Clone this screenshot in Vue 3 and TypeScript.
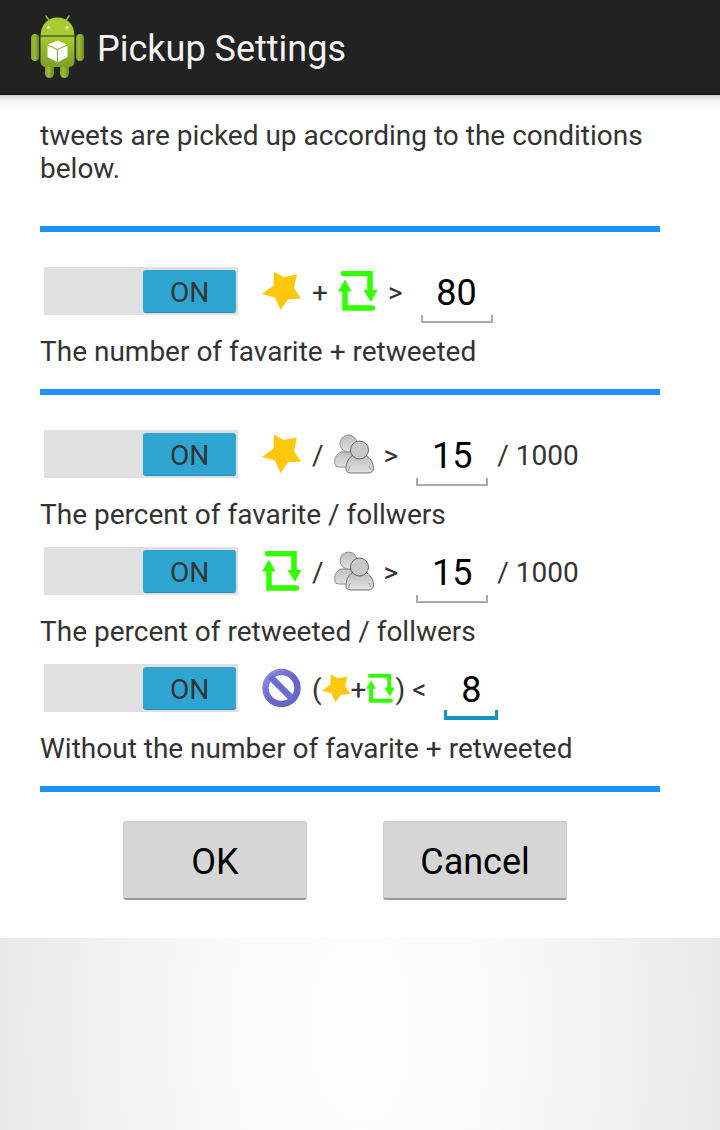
<script setup lang="ts">
import { reactive } from 'vue'

type IconName = 'star' | 'retweet' | 'people' | 'ban'
interface Part { icon?: IconName; text?: string }
interface Condition {
  id: string
  enabled: boolean
  parts: Part[]
  compact?: boolean
  operator: string
  value: string
  suffix?: string
  caption: string
  endsGroup: boolean
}

const conditions = reactive<Condition[]>([
  { id: 'total', enabled: true, parts: [{ icon: 'star' }, { text: '+' }, { icon: 'retweet' }], operator: '>', value: '80', caption: 'The number of favarite + retweeted', endsGroup: true },
  { id: 'favorite', enabled: true, parts: [{ icon: 'star' }, { text: '/' }, { icon: 'people' }], operator: '>', value: '15', suffix: '/ 1000', caption: 'The percent of favarite / follwers', endsGroup: false },
  { id: 'retweet', enabled: true, parts: [{ icon: 'retweet' }, { text: '/' }, { icon: 'people' }], operator: '>', value: '15', suffix: '/ 1000', caption: 'The percent of retweeted / follwers', endsGroup: false },
  { id: 'without', enabled: true, compact: true, parts: [{ icon: 'ban' }, { text: '(' }, { icon: 'star' }, { text: '+' }, { icon: 'retweet' }, { text: ')' }], operator: '<', value: '8', caption: 'Without the number of favarite + retweeted', endsGroup: true },
])
</script>

<template>
  <div class="screen">
    <svg class="defs" aria-hidden="true">
      <defs>
        <linearGradient id="droid" x1="0" y1="0" x2="0" y2="1">
          <stop offset="0" stop-color="#a6c82f" /><stop offset="1" stop-color="#7ba024" />
        </linearGradient>
        <linearGradient id="limb" x1="0" y1="0" x2="1" y2="0">
          <stop offset="0" stop-color="#7c9f28" /><stop offset=".4" stop-color="#9abd32" /><stop offset="1" stop-color="#66881c" />
        </linearGradient>
        <linearGradient id="person" x1="0" y1="0" x2="0" y2="1">
          <stop offset="0" stop-color="#bdbdbd" /><stop offset="1" stop-color="#e2e2e2" />
        </linearGradient>
        <linearGradient id="forbid" x1="0" y1="0" x2="1" y2="1">
          <stop offset="0" stop-color="#8f8fdf" /><stop offset=".5" stop-color="#6868cc" /><stop offset="1" stop-color="#6464c8" />
        </linearGradient>
        <symbol id="icon-star" viewBox="0 0 40 40">
          <path fill="#ffc80a" d="M12 .5 21.500 6 35 3.500 32 17 39 27.500 26 28.500 18.500 39 13 26.500 0 23 11.500 14.500Z" />
        </symbol>
        <symbol id="icon-retweet" viewBox="0 0 40 40">
          <path fill="none" stroke="#32ff00" stroke-width="5.500" stroke-linecap="round" stroke-linejoin="miter" d="M5.500 2.500H32V21M34.500 37H7V19" />
          <path fill="#32ff00" d="M0 20.500 7 8.500 13.500 20.500ZM25.500 19H39.500L33 31Z" />
        </symbol>
        <symbol id="icon-people" viewBox="0 0 40 40">
          <g fill="url(#person)" stroke="#8e8e8e" stroke-width="1">
            <path d="M1 30C0 25 2 20 7 18H18V33H5Q1 33 1 30Z" />
            <circle cx="14.500" cy="9.500" r="8.500" />
            <path stroke="#707070" d="M12 35C12 28 15 23 20 21H31C36 23 39 28 39.500 34Q39.500 39 34 39H17Q12 39 12 35Z" />
            <circle cx="25.500" cy="16" r="9" fill="#c9c9c9" stroke="#656565" />
          </g>
          <path fill="none" stroke="#999" d="M16 32 14.500 37M35 32 37 36" />
        </symbol>
        <symbol id="icon-ban" viewBox="0 0 40 40">
          <circle cx="19.500" cy="20" r="16" fill="none" stroke="url(#forbid)" stroke-width="6.500" />
          <path stroke="#6b6bd0" stroke-width="6.500" d="M8.500 9 30.500 31" />
        </symbol>
      </defs>
    </svg>

    <header class="bar">
      <svg class="droid" viewBox="0 0 54 64" aria-hidden="true">
        <path stroke="#9dbb3a" stroke-width="1.500" stroke-linecap="round" d="M16 1 20 7M39 1 35 7" />
        <rect x="15" y="46" width="9" height="17" rx="4.500" fill="url(#limb)" />
        <rect x="30" y="46" width="9" height="17" rx="4.500" fill="url(#limb)" />
        <rect x="1" y="19" width="8" height="27" rx="4" fill="url(#limb)" />
        <rect x="46" y="19" width="8" height="27" rx="4" fill="url(#limb)" />
        <path fill="#a9cb32" d="M10.500 20.500C11 9 18 2.500 27.500 2.500S44 9 44.500 20.500Z" />
        <path fill="url(#droid)" d="M10.500 21.500H44.500V46Q44.500 52 38.500 52H16.500Q10.500 52 10.500 46Z" />
        <circle cx="18.500" cy="12.500" r="1.500" fill="#f2f8df" /><circle cx="37" cy="12.500" r="1.500" fill="#f2f8df" />
        <path fill="#fff" d="M27.500 25.500 37 29.500 27.500 34 18 29.500ZM17.500 30.500 27 35V47L17.500 42ZM37.500 30.500 28 35V47L37.500 42Z" />
      </svg>
      <h1>Pickup Settings</h1>
    </header>

    <form class="panel" @submit.prevent>
      <p class="intro">tweets are picked up according to the conditions below.</p>
      <hr />
      <template v-for="c in conditions" :key="c.id">
        <section class="condition" :class="{ first: c.id === 'total' || c.id === 'favorite' }">
          <div class="row">
            <label class="switch">
              <input v-model="c.enabled" type="checkbox" role="switch" :aria-label="c.caption" />
              <span class="thumb">{{ c.enabled ? 'ON' : 'OFF' }}</span>
            </label>
            <div class="formula" :class="{ compact: c.compact }">
              <template v-for="(p, i) in c.parts" :key="i">
                <svg v-if="p.icon" class="icon" :class="p.icon" aria-hidden="true"><use :href="`#icon-${p.icon}`" /></svg>
                <span v-else class="sign">{{ p.text }}</span>
              </template>
              <span class="sign operator">{{ c.operator }}</span>
            </div>
            <label class="field" :class="{ active: c.compact }" :for="`value-${c.id}`">
              <input :id="`value-${c.id}`" v-model="c.value" type="text" inputmode="numeric" :aria-label="c.caption" />
            </label>
            <span v-if="c.suffix" class="sign suffix">{{ c.suffix }}</span>
          </div>
          <p class="caption">{{ c.caption }}</p>
        </section>
        <hr v-if="c.endsGroup" />
      </template>
      <div class="actions">
        <button type="submit">OK</button>
        <button type="button">Cancel</button>
      </div>
    </form>
  </div>
</template>

<style>
body {
  margin: 0;
}
</style>

<style scoped>
.screen {
  min-height: 100vh;
  background: radial-gradient(ellipse 52% 60% at 50% 91%, #fdfdfd 0%, #fafafa 35%, #f2f2f2 65%, #e8e8e8 100%);
  font-family: Roboto, "Liberation Sans", sans-serif;
  font-size: 28px;
  line-height: 33px;
  color: #333;
}
.defs {
  position: absolute;
  width: 0;
  height: 0;
}
.bar {
  display: flex;
  align-items: center;
  gap: 13px;
  box-sizing: border-box;
  height: 95px;
  padding: 0 30px;
  background: #222;
  border-bottom: 2px solid #151515;
}
.droid {
  width: 54px;
  height: 64px;
}
h1 {
  margin: 0;
  padding-top: 4px;
  font-size: 36px;
  line-height: 44px;
  font-weight: 400;
  color: #f3f3f3;
}
.panel {
  padding: 24px 60px 38px 40px;
  background: linear-gradient(#d4d4d4, #f6f6f6 6px, #fff 16px);
}
p {
  margin: 0;
}
.intro {
  padding-bottom: 41px;
}
hr {
  height: 6px;
  margin: 0;
  border: 0;
  background: #1e90ff;
}
.condition {
  padding-bottom: 4px;
}
.condition.first {
  padding-top: 23px;
}
.condition + hr {
  margin-top: 17px;
}
.row {
  display: flex;
  align-items: center;
  height: 72px;
  padding-left: 4px;
}
.switch {
  display: flex;
  justify-content: flex-end;
  position: relative;
  box-sizing: border-box;
  width: 194px;
  height: 48px;
  padding: 3px 2px;
  background: #e0e0e0;
}
.switch:not(:has(:checked)) {
  justify-content: flex-start;
}
.switch input {
  position: absolute;
  inset: 0;
  width: 100%;
  height: 100%;
  margin: 0;
  opacity: 0;
}
.thumb {
  box-sizing: border-box;
  width: 93px;
  height: 43px;
  padding-top: 1px;
  border-bottom: 1px solid #2492b8;
  border-radius: 3px;
  background: #2da5d0;
  line-height: 44px;
  text-align: center;
}
.formula {
  display: flex;
  align-items: center;
  gap: 10px;
  margin: 0 18px 0 24px;
}
.sign {
  padding-top: 2px;
}
.icon {
  flex: none;
  width: 40px;
  height: 40px;
}
.compact {
  gap: 0;
}
.compact .icon {
  width: 29px;
  height: 29px;
}
.compact .icon.ban {
  width: 40px;
  height: 40px;
  margin-right: 10px;
}
.compact .operator {
  margin-left: 7px;
}
.field {
  display: flex;
  position: relative;
  width: 72px;
  height: 64px;
}
.field::after {
  content: "";
  position: absolute;
  inset: auto 0 0;
  height: 6px;
  border: 2px solid #aaa;
  border-top: 0;
  pointer-events: none;
}
.field.active {
  width: 54px;
}
.field.active::after {
  border-width: 0 3px 4px;
  border-color: #1395bd;
}
.field input {
  width: 100%;
  padding: 4px 0 0;
  border: 0;
  outline: 0;
  background: transparent;
  font: inherit;
  font-size: 36px;
  text-align: center;
  color: #000;
}
.suffix {
  margin-left: 9px;
}
.caption {
  margin-top: 8px;
}
.actions {
  display: flex;
  justify-content: center;
  gap: 76px;
  padding: 29px 10px 0 0;
}
button {
  width: 184px;
  height: 79px;
  padding: 4px 0 0;
  border: 1px solid #ccc;
  border-bottom: 2px solid #999;
  border-radius: 3px;
  background: #d6d6d6;
  font: inherit;
  font-size: 36px;
  color: #000;
}
</style>
